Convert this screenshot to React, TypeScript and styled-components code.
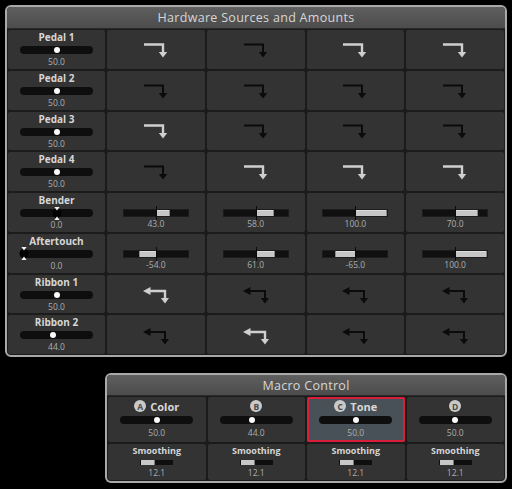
import React from 'react';
import styled, { createGlobalStyle } from 'styled-components';

const GlobalStyle = createGlobalStyle`
  html, body { margin: 0; padding: 0; background: #000; }
  body { font-family: "Open Sans", "Liberation Sans", sans-serif; }
`;

const Page = styled.div`
  width: 512px;
  height: 489px;
  box-sizing: border-box;
  padding: 5px 5px 0 5px;
  display: flex;
  flex-direction: column;
  gap: 16px;
`;

const Panel = styled.section<{ $width: number }>`
  width: ${p => p.$width}px;
  align-self: flex-end;
  box-sizing: border-box;
  border: 2px solid #a9a9a9;
  border-radius: 6px;
  background: #1b1b1b;
  overflow: hidden;
`;

const TitleBar = styled.div<{ $h: number }>`
  height: ${p => p.$h}px;
  display: flex;
  align-items: center;
  justify-content: center;
  background: linear-gradient(#5f5f5f, #4c4c4c);
  border-bottom: 1px solid #2a2a2a;
  box-sizing: border-box;
  color: #d6d6d6;
  font-size: 12.5px;
  letter-spacing: 0.3px;
`;

const HwGrid = styled.div`
  display: grid;
  grid-template-columns: 97px repeat(4, 1fr);
  grid-template-rows: repeat(8, 38.75px);
  gap: 2px;
  padding: 1px;
`;

const MacroGrid = styled.div`
  display: grid;
  grid-template-columns: repeat(4, 1fr);
  grid-template-rows: 45px 36px;
  gap: 2px;
  padding: 1px;
`;

const Cell = styled.div<{ $selected?: boolean }>`
  background: ${p => (p.$selected ? '#485157' : '#333333')};
  box-shadow: ${p => (p.$selected ? 'inset 0 0 0 2px #d81e3a' : 'none')};
  border-radius: 2px;
  display: flex;
  flex-direction: column;
  align-items: center;
  box-sizing: border-box;
`;

const SourceCell = styled(Cell)`
  padding-top: 1px;
  gap: 2px;
`;

const ArrowCell = styled(Cell)`
  justify-content: center;
`;

const AmountCell = styled(Cell)`
  padding-top: 16px;
  gap: 1px;
`;

const MacroCell = styled(Cell)`
  padding-top: 3px;
`;

const SmoothCell = styled(Cell)`
  padding-top: 1px;
`;

const Label = styled.div`
  font-size: 10px;
  font-weight: 700;
  line-height: 13px;
  color: #d6d6d6;
`;

const MacroLabel = styled.div`
  display: flex;
  align-items: center;
  gap: 4px;
  height: 12px;
  font-size: 11px;
  font-weight: 700;
  color: #d8d8d8;
  margin-bottom: 4px;
`;

const Letter = styled.span`
  width: 12px;
  height: 12px;
  border-radius: 50%;
  background: #c9c9c9;
  color: #4a4a4a;
  font-size: 8.5px;
  font-weight: 700;
  display: flex;
  align-items: center;
  justify-content: center;
`;

const SmoothLabel = styled.div`
  font-size: 9px;
  font-weight: 700;
  line-height: 12px;
  color: #d6d6d6;
  margin-bottom: 3px;
`;

const Value = styled.div<{ $mt?: number }>`
  font-size: 8.5px;
  line-height: 11px;
  color: #adadad;
  margin-top: ${p => p.$mt ?? 0}px;
`;

const Track = styled.div`
  position: relative;
  width: 73px;
  height: 8px;
  border-radius: 4px;
  background: #0e0e0e;
  flex: none;
`;

const Knob = styled.div`
  position: absolute;
  top: 1px;
  width: 6px;
  height: 6px;
  margin-left: -3px;
  border-radius: 50%;
  background: #fafafa;
`;

const Marker = styled.svg`
  position: absolute;
  top: -2.5px;
  margin-left: -5px;
`;

const BarTrack = styled.div`
  position: relative;
  width: 66px;
  height: 8px;
  background: #101010;
  box-shadow: inset 0 0 0 1px #1c1c1c;
  flex: none;
`;

const BarFill = styled.div<{ $neg: boolean }>`
  position: absolute;
  top: 1px;
  bottom: 1px;
  background: #c6c6c6;
  box-shadow: inset 0 1px 0 #dcdcdc;
  ${p => (p.$neg ? 'border-left: 1px solid #8a8a8a;' : 'border-right: 1px solid #8a8a8a;')}
  box-sizing: border-box;
`;

const CenterTick = styled.div`
  position: absolute;
  left: 33px;
  top: -3px;
  bottom: -3px;
  width: 1px;
  background: #0a0a0a;
`;

const SmoothTrack = styled.div`
  position: relative;
  width: 33px;
  height: 5px;
  background: #0f0f0f;
  flex: none;
`;

const SmoothFill = styled.div`
  position: absolute;
  left: 1px;
  top: 0;
  bottom: 0;
  width: 14px;
  background: #c8c8c8;
  border-right: 1px solid #7a7a7a;
  box-sizing: border-box;
`;

const ArrowSvg = styled.svg`
  display: block;
  flex: none;
`;

const LIGHT = '#cfcfcf';
const DARK = '#0b0b0b';

function PedalArrow({ on }: { on: boolean }) {
  const c = on ? LIGHT : DARK;
  return (
    <ArrowSvg width={24} height={16} viewBox="0 0 24 16" style={{ marginTop: 1 }}>
      <path d="M0 2.5 H19 V10.5" stroke={c} strokeWidth={on ? 2.4 : 2} fill="none" />
      <polygon points="14.8,10 23.2,10 19,15.6" fill={c} />
    </ArrowSvg>
  );
}

function RibbonArrow({ on }: { on: boolean }) {
  const c = on ? LIGHT : DARK;
  return (
    <ArrowSvg width={26} height={18} viewBox="0 0 26 18" style={{ marginTop: 3 }}>
      <polygon points="0,5 7.5,1 7.5,9" fill={c} />
      <path d="M6 5 H22 V12.5" stroke={c} strokeWidth={on ? 2.4 : 2} fill="none" />
      <polygon points="17.8,12 26,12 22,17.5" fill={c} />
    </ArrowSvg>
  );
}

type Row = {
  name: string;
  value: string;
  pos: number;
  bipolar?: boolean;
  arrows?: { kind: 'pedal' | 'ribbon'; on: number[] };
  bars?: number[];
};

const rows: Row[] = [
  { name: 'Pedal 1', value: '50.0', pos: 0.5, arrows: { kind: 'pedal', on: [1, 0, 1, 1] } },
  { name: 'Pedal 2', value: '50.0', pos: 0.5, arrows: { kind: 'pedal', on: [0, 0, 0, 0] } },
  { name: 'Pedal 3', value: '50.0', pos: 0.5, arrows: { kind: 'pedal', on: [1, 0, 0, 0] } },
  { name: 'Pedal 4', value: '50.0', pos: 0.5, arrows: { kind: 'pedal', on: [0, 1, 1, 1] } },
  { name: 'Bender', value: '0.0', pos: 0.5, bipolar: true, bars: [43, 58, 100, 70] },
  { name: 'Aftertouch', value: '0.0', pos: 0, bipolar: true, bars: [-54, 61, -65, 100] },
  { name: 'Ribbon 1', value: '50.0', pos: 0.5, arrows: { kind: 'ribbon', on: [1, 0, 0, 0] } },
  { name: 'Ribbon 2', value: '44.0', pos: 0.44, arrows: { kind: 'ribbon', on: [0, 1, 0, 0] } },
];

const macros = [
  { letter: 'A', name: 'Color', value: '50.0', pos: 0.5 },
  { letter: 'B', name: '', value: '44.0', pos: 0.44 },
  { letter: 'C', name: 'Tone', value: '50.0', pos: 0.5, selected: true },
  { letter: 'D', name: '', value: '50.0', pos: 0.5 },
];

function knobLeft(pos: number, width = 73) {
  return 4 + pos * (width - 8);
}

function Slider({ pos, bipolar }: { pos: number; bipolar?: boolean }) {
  const left = knobLeft(pos);
  return (
    <Track>
      {bipolar ? (
        <Marker width={10} height={13} viewBox="0 0 10 13" style={{ left }}>
          <circle cx={5} cy={6.5} r={4.5} fill="#000" />
          <polygon points="2.4,0 7.6,0 5,3.6" fill="#f2f2f2" />
          <polygon points="2.4,13 7.6,13 5,9.4" fill="#f2f2f2" />
        </Marker>
      ) : (
        <Knob style={{ left }} />
      )}
    </Track>
  );
}

function AmountBar({ v }: { v: number }) {
  const half = 32;
  const w = (Math.abs(v) / 100) * half;
  const left = v >= 0 ? 33 : 33 - w;
  return (
    <BarTrack>
      <BarFill $neg={v < 0} style={{ left, width: w }} />
      <CenterTick />
    </BarTrack>
  );
}

export default function App() {
  return (
    <>
      <GlobalStyle />
      <Page>
        <Panel $width={502}>
          <TitleBar $h={22}>Hardware Sources and Amounts</TitleBar>
          <HwGrid>
            {rows.map(r => (
              <React.Fragment key={r.name}>
                <SourceCell>
                  <Label>{r.name}</Label>
                  <Slider pos={r.pos} bipolar={r.bipolar} />
                  <Value>{r.value}</Value>
                </SourceCell>
                {r.arrows &&
                  r.arrows.on.map((on, i) => (
                    <ArrowCell key={i}>
                      {r.arrows!.kind === 'pedal' ? <PedalArrow on={!!on} /> : <RibbonArrow on={!!on} />}
                    </ArrowCell>
                  ))}
                {r.bars &&
                  r.bars.map((v, i) => (
                    <AmountCell key={i}>
                      <AmountBar v={v} />
                      <Value>{v.toFixed(1)}</Value>
                    </AmountCell>
                  ))}
              </React.Fragment>
            ))}
          </HwGrid>
        </Panel>
        <Panel $width={402}>
          <TitleBar $h={21}>Macro Control</TitleBar>
          <MacroGrid>
            {macros.map(m => (
              <MacroCell key={m.letter} $selected={m.selected}>
                <MacroLabel>
                  <Letter>{m.letter}</Letter>
                  {m.name && <span>{m.name}</span>}
                </MacroLabel>
                <Slider pos={m.pos} />
                <Value $mt={3}>{m.value}</Value>
              </MacroCell>
            ))}
            {macros.map(m => (
              <SmoothCell key={'s' + m.letter}>
                <SmoothLabel>Smoothing</SmoothLabel>
                <SmoothTrack>
                  <SmoothFill />
                </SmoothTrack>
                <Value $mt={2}>12.1</Value>
              </SmoothCell>
            ))}
          </MacroGrid>
        </Panel>
      </Page>
    </>
  );
}
